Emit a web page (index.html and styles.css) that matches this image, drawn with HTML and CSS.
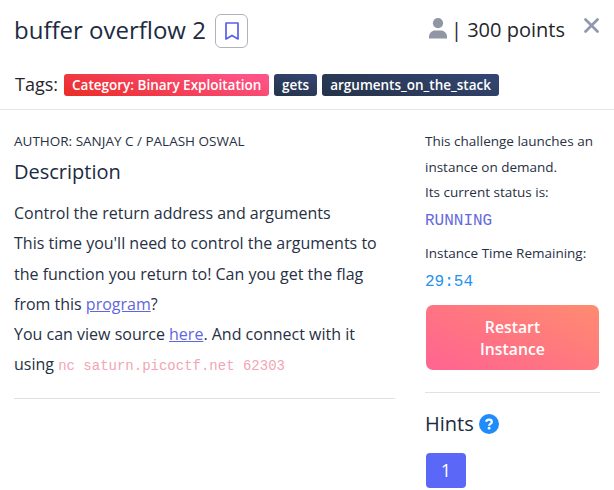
FILE: index.html
```html
<!DOCTYPE html>
<html lang="en">
<head>
<meta charset="utf-8">
<title>buffer overflow 2</title>
<link rel="stylesheet" href="styles.css">
</head>
<body>
<header class="head">
  <div class="title-row">
    <h1 class="title">buffer overflow 2</h1>
    <button class="bookmark" aria-label="Bookmark"><svg width="16" height="20" viewBox="0 0 16 20"><path d="M2 2h12v16l-6-3.6L2 18z" fill="none" stroke="#5a5fe8" stroke-width="1.7" stroke-linejoin="round"/></svg></button>
    <svg class="user" width="18" height="21" viewBox="0 0 18 21"><circle cx="9" cy="5.2" r="5.1"/><path d="M0 20.5v-1.4c0-4 3-6.5 6-6.5h6c3 0 6 2.500 6 6.500v1.400z"/></svg>
    <div class="points">| 300 points</div>
    <button class="close" aria-label="Close"><svg width="15" height="15" viewBox="0 0 15 15"><path d="M1.500 1.500l12 12M13.500 1.500l-12 12" fill="none" stroke="#8f98ae" stroke-width="2.700" stroke-linecap="round"/></svg></button>
  </div>
  <div class="tags"><span class="tags-label">Tags:</span><span class="tag category">Category: Binary Exploitation</span><span class="tag">gets</span><span class="tag">arguments_on_the_stack</span></div>
</header>
<div class="columns">
  <main class="main">
    <p class="author">AUTHOR: SANJAY C / PALASH OSWAL</p>
    <h2 class="heading">Description</h2>
    <p class="text">Control the return address and arguments<br>This time you'll need to control the arguments to<br>the function you return to! Can you get the flag<br>from this <a href="#">program</a>?<br>You can view source <a href="#">here</a>. And connect with it<br>using <code>nc saturn.picoctf.net 62303</code></p>
  </main>
  <aside class="side">
    <p class="small">This challenge launches an<br>instance on demand.<br>Its current status is:</p>
    <p class="status">RUNNING</p>
    <p class="small remaining">Instance Time Remaining:</p>
    <p class="status time">29:54</p>
    <button class="restart">Restart<br>Instance</button>
    <div class="hints"><h2 class="heading">Hints</h2><svg width="20" height="20" viewBox="0 0 20 20"><circle cx="10" cy="10" r="10" fill="#1f8cf9"/><path d="M7.100 7.700C7.500 6.400 8.500 5.700 10 5.700c1.600 0 2.800.8 2.800 2.200 0 1.900-2.700 1.900-2.700 3.900" fill="none" stroke="#fff" stroke-width="2.200"/><circle cx="10.100" cy="14.200" r="1.400" fill="#fff"/></svg></div>
    <button class="hint">1</button>
  </aside>
</div>
</body>
</html>
```
FILE: styles.css
```css
* { box-sizing: border-box; }
body { margin: 0; background: #fff; color: #273044; font-family: "Open Sans", sans-serif; overflow: hidden; }
h1, h2, p { margin: 0; font-weight: 400; white-space: nowrap; }
button { font: inherit; padding: 0; border: 0; background: none; }
svg { display: block; flex: none; }
.head { height: 110px; border-bottom: 1px solid #e6e7ea; padding: 14px 14px 0; }
.title-row { display: flex; height: 34px; }
.title { width: 201px; font-size: 24px; line-height: 32px; color: #202b40; }
.bookmark { width: 33px; height: 34px; border: 1px solid #aeb2bb; border-radius: 6px; display: flex; align-items: center; justify-content: center; }
.user { margin: 4px 4px 0 auto; fill: #9196a5; }
.points { width: 133px; font-size: 20px; line-height: 31px; color: #24262b; white-space: nowrap; }
.close { width: 15px; height: 15px; margin: 4px 1px 0 0; }
.tags { display: flex; align-items: center; margin-top: 25px; height: 23px; white-space: nowrap; }
.tags-label { width: 50px; padding-left: 1px; font-size: 18px; line-height: 22px; color: #24262b; margin-top: -2px; }
.tag { height: 22px; margin-right: 5px; padding: 0 8px; border-radius: 3px; color: #fff; font-size: 13.500px; font-weight: 600; line-height: 22px; background: linear-gradient(15deg, #253247, #344675); }
.category { width: 205px; background: linear-gradient(15deg, #ea2c24, #fd5387 90%); }
.columns { display: flex; padding: 0 14px; gap: 30px; }
.main { width: 381px; height: 289px; border-bottom: 1px solid #e0e1e4; padding-top: 20px; }
.author, .small { font-size: 13.500px; line-height: 25.500px; }
.author { line-height: 23px; }
.heading { font-size: 20px; line-height: 28px; color: #202b40; }
.main .heading { margin-top: 5px; }
.text { margin-top: 12px; font-size: 16px; line-height: 30.250px; }
a { color: #5f66df; text-decoration: underline; }
code { display: inline-block; font: 14px/32px "Liberation Mono", monospace; color: #f2a5b5; }
.side { width: 175px; padding-top: 19px; }
.status { margin-top: 2px; font: 16px/26px "Liberation Mono", monospace; color: #6569dd; }
.remaining { margin-top: 7px; }
.time { margin-top: 3px; color: #2492ee; }
.restart { display: block; width: 173px; height: 65px; margin: 10px 1px 0; border-radius: 7px; color: #fff; font-size: 15.800px; font-weight: 600; line-height: 22px; background: linear-gradient(25deg, #ff6492, #ff7680 50%, #ff8c70); }
.hints { display: flex; align-items: center; gap: 5px; border-top: 1px solid #e0e1e4; margin-top: 22px; padding-top: 17px; }
.hint { display: block; width: 40px; height: 35px; margin: 15px 0 0 1px; border-radius: 4px; background: #5b67f6; color: #fff; font-size: 18px; line-height: 35px; }
```
